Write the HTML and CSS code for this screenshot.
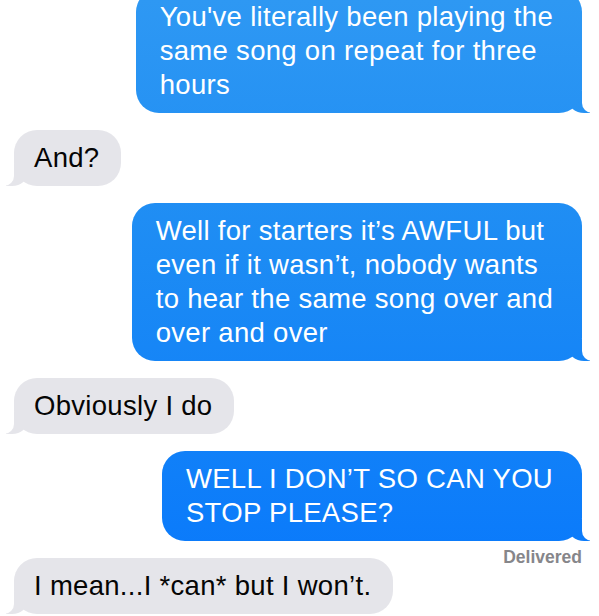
FILE: index.html
```html
<!DOCTYPE html>
<html lang="en">
<head>
<meta charset="utf-8">
<title>Messages</title>
<link rel="stylesheet" href="styles.css">
</head>
<body>
<main class="thread">
  <div class="msg sent">
    <p class="bubble">You've literally been playing the<br>same song on repeat for three<br>hours</p>
  </div>
  <div class="msg received">
    <p class="bubble">And?</p>
  </div>
  <div class="msg sent">
    <p class="bubble">Well for starters it’s AWFUL but<br>even if it wasn’t, nobody wants<br>to hear the same song over and<br>over and over</p>
  </div>
  <div class="msg received">
    <p class="bubble">Obviously I do</p>
  </div>
  <div class="msg sent">
    <p class="bubble">WELL I DON’T SO CAN YOU<br>STOP PLEASE?</p>
    <span class="status">Delivered</span>
  </div>
  <div class="msg received">
    <p class="bubble">I mean...I *can* but I won’t.</p>
  </div>
</main>
</body>
</html>
```

FILE: styles.css
```css
html, body {
  margin: 0;
  padding: 0;
  background: #ffffff;
}

body {
  font-family: "Liberation Sans", Arial, Helvetica, sans-serif;
  overflow: hidden;
}

.thread {
  display: flex;
  flex-direction: column;
  gap: 17px;
  padding: 0 17px 0 14px;
  margin-top: -11px;
}

.msg {
  position: relative;
  display: flex;
}

.msg.sent {
  align-self: flex-end;
}

.msg.received {
  align-self: flex-start;
}

.bubble {
  position: relative;
  margin: 0;
  box-sizing: border-box;
  white-space: nowrap;
  font-size: 27.5px;
  letter-spacing: 0.3px;
  line-height: 34px;
  border-radius: 23px;
}

.sent .bubble {
  padding: 11px 29px 11px 24px;
  color: #ffffff;
  background: linear-gradient(180deg, #2e98f3 0px, #1c8bf4 260px, #0a7afb 560px) fixed;
}

.received .bubble {
  padding: 11px 22px 11px 20px;
  color: #050505;
  background: #e5e5ea;
}

/* bubble tails */
.bubble::before,
.bubble::after {
  content: "";
  position: absolute;
  bottom: 0;
  height: 22px;
}

.sent .bubble::before {
  right: -8px;
  width: 22px;
  background: linear-gradient(180deg, #2e98f3 0px, #1c8bf4 260px, #0a7afb 560px) fixed;
  border-bottom-left-radius: 16px 14px;
}

.sent .bubble::after {
  right: -12px;
  width: 12px;
  background: #ffffff;
  border-bottom-left-radius: 10px;
}

.received .bubble::before {
  left: -8px;
  width: 22px;
  background: #e5e5ea;
  border-bottom-right-radius: 16px 14px;
}

.received .bubble::after {
  left: -12px;
  width: 12px;
  background: #ffffff;
  border-bottom-right-radius: 10px;
}

.status {
  position: absolute;
  right: 0;
  top: calc(100% + 8px);
  font-size: 17.5px;
  line-height: 17px;
  font-weight: 700;
  color: #86868a;
}
```
